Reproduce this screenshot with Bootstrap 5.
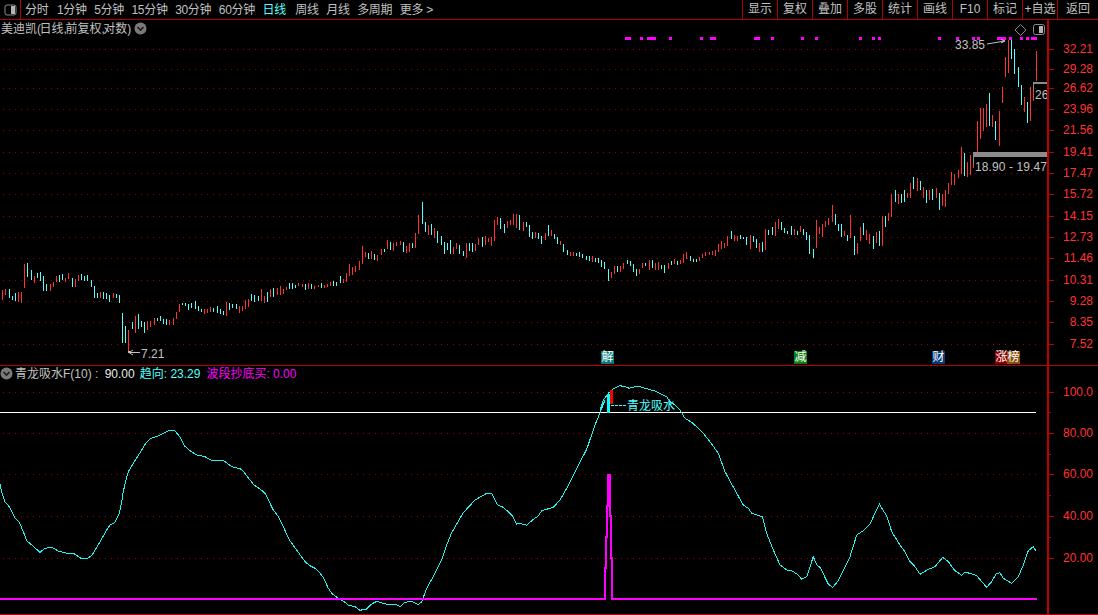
<!DOCTYPE html>
<html lang="zh">
<head>
<meta charset="utf-8">
<title>美迪凯</title>
<link href="https://cdn.jsdelivr.net/npm/bootstrap@5.3.0/dist/css/bootstrap.min.css" rel="stylesheet">
<style>
html,body{background:#000;height:100%;overflow:hidden}
body{font:12px/1 "Liberation Sans","Noto Sans CJK SC",sans-serif;color:#c0c0c0}
.tdx-app{width:1098px;height:615px}
.tdx-bar{height:20px;border-bottom:1px solid #b00000;flex:none}
.tdx-toggle{width:21px;border-right:1px solid #b00000}
.tdx-periods{padding-left:4px;gap:7.5px}
.tdx-periods span{letter-spacing:-.3px}
.tdx-periods span:first-child{margin-right:1px}
.tdx-periods .tdx-on{color:#54ffff;margin-right:2px}
.tdx-tools span{width:35px;height:19px;border-left:1px solid #b00000;text-align:center;line-height:19px}
.tdx-tools span:last-child{width:41px}
.tdx-pane{position:relative;flex:none;border-bottom:1px solid #b00000}
.tdx-main{height:346px}
.tdx-sub{height:249px}
.tdx-pane svg{display:block;position:absolute;left:0;top:0}
.tdx-title{position:relative;z-index:1;white-space:nowrap}
.tdx-main .tdx-title{padding:2px 0 0 1px;gap:4px}
.tdx-sub .tdx-title{padding:1px 0 0 0}
.tdx-comma{letter-spacing:-1.5px}
.tdx-paren{letter-spacing:-1.5px}
.tdx-name{margin-left:2px}
.tdx-cyan{color:#54ffff;margin-left:5px}
.tdx-mag{color:#ff00ff;margin-left:6px}
.tdx-white{color:#e8e8e8;margin-left:3px}
.tdx-chip{position:absolute;width:13px;height:13px;top:331px;color:#fff;text-align:center;line-height:13px;z-index:1}
.ax text{font-size:12px;fill:#ff3232;text-anchor:end}
.lab{font-size:12px;fill:#c0c0c0}
.crisp{shape-rendering:crispEdges}
</style>
</head>
<body>
<div class="tdx-app d-flex flex-column">
  <div class="tdx-bar d-flex align-items-stretch">
    <div class="tdx-toggle d-flex align-items-center justify-content-center">
      <svg width="13" height="12" viewBox="0 0 13 12"><rect x="1" y="1" width="11" height="10" rx="2" fill="none" stroke="#8a8a8a"/><rect x="7" y="2" width="4" height="8" fill="#b5b5b5"/></svg>
    </div>
    <div class="tdx-periods d-flex align-items-center flex-grow-1">
      <span>分时</span><span>1分钟</span><span>5分钟</span><span>15分钟</span><span>30分钟</span><span>60分钟</span><span class="tdx-on">日线</span><span>周线</span><span>月线</span><span>多周期</span><span>更多 &gt;</span>
    </div>
    <div class="tdx-tools d-flex">
      <span>显示</span><span>复权</span><span>叠加</span><span>多股</span><span>统计</span><span>画线</span><span>F10</span><span>标记</span><span>+自选</span><span>返回</span>
    </div>
  </div>

  <div class="tdx-pane tdx-main">
    <svg id="mainSvg" width="1098" height="345" viewBox="0 20 1098 345" aria-label="K线图">
      <g id="mainGrid" class="crisp"></g>
      <g id="candles" class="crisp"></g>
      <g id="flags" fill="#ff00ff" class="crisp"></g>
      <g class="crisp">
        <rect x="973" y="152" width="74" height="5" fill="#8c8c8c"/>
        <rect x="973" y="157" width="1" height="7" fill="#8c8c8c"/>
        <rect x="1033" y="82" width="14" height="2" fill="#8c8c8c"/>
        <rect x="1033" y="84" width="1" height="7" fill="#8c8c8c"/>
      </g>
      <text class="lab" x="1035" y="99">26</text>
      <text class="lab" x="975" y="171" textLength="72">18.90 - 19.47</text>
      <text class="lab" x="955" y="49">33.85</text>
      <path d="M987 44 L1005 41 M1001 39.5 L1005 41 L1001 43" fill="none" stroke="#c0c0c0"/>
      <text class="lab" x="141" y="358">7.21</text>
      <path d="M140 352.5 H129 M133 350 L129 352.5 L133 355" fill="none" stroke="#c0c0c0"/>
      <rect x="128" y="351" width="2" height="2" fill="#c0c0c0"/>
      <path d="M1020.5 24.5 L1026 30 L1020.5 35.5 L1015 30 Z" fill="none" stroke="#8a8a8a"/>
      <rect x="1033.5" y="24.5" width="11" height="10" rx="2" fill="none" stroke="#8a8a8a"/>
      <rect x="1039" y="26" width="4" height="7" fill="#b5b5b5"/>
      <g id="mainAxis"></g>
    </svg>
    <div class="tdx-title d-flex align-items-center">
      <span>美迪凯<span class="tdx-paren">(</span>日线<span class="tdx-comma">,</span>前复权<span class="tdx-comma">,</span>对数<span class="tdx-paren">)</span></span>
      <svg class="position-static" width="13" height="13" viewBox="0 0 13 13"><circle cx="6.5" cy="6.5" r="6" fill="#7a7a7a"/><path d="M3.5 5 L6.5 8 L9.5 5" fill="none" stroke="#1c1c1c" stroke-width="1.6"/></svg>
    </div>
    <div class="tdx-chip" style="left:601px;background:#0a7a7a">解</div>
    <div class="tdx-chip" style="left:794px;background:#0a8010">减</div>
    <div class="tdx-chip" style="left:932px;background:#0a3a7a">财</div>
    <div class="tdx-chip" style="left:995px;background:#8b0000">涨</div>
    <div class="tdx-chip" style="left:1007px;background:#8b5010">榜</div>
  </div>

  <div class="tdx-pane tdx-sub">
    <svg id="subSvg" width="1098" height="248" viewBox="0 366 1098 248" aria-label="指标图">
      <g id="subGrid" class="crisp"></g>
      <rect x="0" y="412" width="1036" height="1" fill="#fff" class="crisp"/>
      <polyline id="curve" fill="none" stroke="#22f4f4" class="crisp"/>
      <rect x="607" y="394" width="3" height="19" fill="#00ffff" class="crisp"/>
      <rect x="610" y="390" width="3" height="14" fill="#ff0000" class="crisp"/>
      <path d="M611 405.5 H626" stroke="#54ffff" stroke-dasharray="3 1" class="crisp"/>
      <text x="627" y="410" font-size="12" fill="#54ffff">青龙吸水</text>
      <path d="M0 599 H604.5 V568 H606 V537 H607 V506 H608 V475 H609.5 V516 H610.5 V558 H611.5 V599 H1037" fill="none" stroke="#ff00ff" stroke-width="2" class="crisp"/>
      <g id="subAxis"></g>
    </svg>
    <div class="tdx-title d-flex align-items-center">
      <svg class="position-static" width="13" height="13" viewBox="0 0 13 13"><circle cx="6.5" cy="6.5" r="6" fill="#7a7a7a"/><path d="M3.5 5 L6.5 8 L9.5 5" fill="none" stroke="#1c1c1c" stroke-width="1.6"/></svg>
      <span class="tdx-name">青龙吸水F(10) :&nbsp;<span class="tdx-white">90.00</span></span>
      <span class="tdx-cyan">趋向: 23.29</span>
      <span class="tdx-mag">波段抄底买: 0.00</span>
    </div>
  </div>
</div>

<script src="https://cdn.jsdelivr.net/npm/bootstrap@5.3.0/dist/js/bootstrap.bundle.min.js"></script>
<script>
var NS='http://www.w3.org/2000/svg';
function el(parent,tag,attrs,text){var e=document.createElementNS(NS,tag);for(var k in attrs)e.setAttribute(k,attrs[k]);if(text)e.textContent=text;document.getElementById(parent).appendChild(e);return e;}
function grid(parent,ys){ys.forEach(function(y){el(parent,'path',{d:'M3 '+(y+.5)+' H1037',stroke:'#a00000','stroke-dasharray':'1 5'});});}

var axisMain=[[49,'32.21'],[69,'29.28'],[88,'26.62'],[109,'23.96'],[130,'21.56'],[152,'19.41'],[173,'17.47'],[194,'15.72'],[216,'14.15'],[237,'12.73'],[258,'11.46'],[280,'10.31'],[301,'9.28'],[322,'8.35'],[344,'7.52']];
var axisSub=[[392,'100.0'],[433,'80.00'],[474,'60.00'],[516,'40.00'],[558,'20.00']];
grid('mainGrid',axisMain.map(function(a){return a[0];}));
grid('subGrid',axisSub.map(function(a){return a[0];}));
function axis(id,list,top,bottom,minor){
  el(id,'rect',{x:1047,y:top,width:2,height:bottom-top,fill:'#c00000',class:'crisp'});
  var g=document.getElementById(id);g.setAttribute('class','ax');
  list.forEach(function(a){
    el(id,'rect',{x:1049,y:a[0],width:5,height:1,fill:'#c00000',class:'crisp'});
    el(id,'text',{x:1093,y:a[0]+4},a[1]);
  });
  minor.forEach(function(y){el(id,'rect',{x:1049,y:y,width:2,height:1,fill:'#c00000',class:'crisp'});});
}
axis('mainAxis',axisMain,20,365,[]);
axis('subAxis',axisSub,366,614,[412,454,495,537]);

/* bars: offset x, offset y, "u color top-bottom" in 3x crop units */
var segs=[
[0,190,'7r300-330 16r297-316 27c298-325 37c318-330 46c309-332 55r305-337 64r306-338 73r222-295 82c220-262 94c240-270 103r258-280 112c250-265 121c246-272 130c258-304 139c283-303 150r283-303 159r276-291 169r258-276 178c255-277 187c252-271 196r265-276 205r250-268 216c263-290 226r266-290 235r255-272 245c252-270 253c257-273 262c256-272 274c270-290 283c288-323 292c310-323 301r306-323 310c306-326 319c309-328 328c316-337 340r310-325 349c312-323 358c315-338 367c370-460 376c408-460 385r420-490 396c396-416 405r378-428 415c372-418 424c392-412 433c396-428 442r393-420 451r393-410 463r385-406 472c384-394 481c378-392 490c386-402 499c388-405 508r390-406 520r383-404 529r366-386 538r342-366 547c339-346 556c340-347 565c343-361 574c340-355 586c334-357 595c349-362 604c356-367 613r357-372 622r358-369 631r352-367 640c354-367 652c347-369 661c357-372 670c364-376 679r336-378 688c339-360 697c341-354 709c342-356 718r349-368 727r347-363 736r331-356 745r327-350 754c312-334 763c314-336 775c318-333 784r297-334 793r319-338 802c307-336 811r296-320 820c295-320 832r293-315 841r288-316 850r296-313 859r290-300 868c280-296 877c280-296 886c286-294 895r278-288'],
[300,190,'7r282-291 16c282-300 25r278-296 34c282-297 43r289-297 55r285-292 64c279-294 73r286-293 82r283-292 91r277-288 100c273-289 109c277-288 121c258-278 130r267-279 139r249-275 148r222-258 157r232-255 166r228-245 178r213-240 187r168-222 196r186-202 205c190-207 214r183-207 223c192-209 232r195-213 244r178-195 253c177-186 262r150-178 271c156-180 280r160-183 289r155-168 301r153-165 310c155-187 319r168-189 328r159-186 337c159-173 346r129-174 355r75-132 367c36-102 376c96-125 385r105-136 394c102-135 403r114-144 412c123-158 424c138-165 433c156-192 442c160-180 451c150-192 460r171-192 469r159-177 478c165-192 490c183-198 499r159-204 508c159-183 517c159-186 526r162-183 535r144-165 547c141-171 556r138-165 565r144-156 574r141-168 583r90-153 592r81-105 601c84-117 613c102-129 622r93-114 631r90-105 640r72-105 649r72-114 658c75-120 670r96-123 679c96-111 688c105-141 697c126-147 706r126-144 715c129-147 724c138-162 736r129-150 745c105-138 754r120-138 763c132-147 772c141-162 781r153-165 790c162-186 802c180-195 811r186-198 820r186-198 829c189-198 838c186-201 847c192-204 859c198-210 868c198-213 877r198-216 886c204-216 895c204-219'],
[600,190,'4c210-232 13c216-237 25c237-273 34r246-264 43r228-252 52c228-246 61r228-246 70r219-237 82c210-222 91c213-228 100c222-246 109c237-258 118r237-252 127r219-234 136c219-228 148r210-240 157c210-234 166r219-240 175r216-240 184c225-237 193c225-249 205r219-237 214c213-225 223r207-222 232c213-225 241r210-222 250r192-219 259r186-207 271c198-213 280c207-216 289c207-216 298r201-213 307r192-204 316r186-198 328r186-195 337r183-195 346r180-198 355r162-186 364r153-177 373r159-174 382r138-168 394c123-147 403r135-153 412r138-153 421c135-147 430c141-147 439c141-165 451r135-177 460c138-156 469c147-174 478r159-186 487c156-186 496r117-180 505c120-135 517c111-135 526r96-138 535r87-117 544c96-120 553c114-129 562c123-132 574c108-135 583r117-135 592c123-135 601r108-126 610c117-135 619c126-150 628c135-192 640c177-204 649r90-174 658r111-132 667r102-141 676r93-111 685r84-105 697r45-96 706c72-105 715c102-123 724c102-141 733r123-138 742c135-153 751r75-144 763c138-195 772r159-192 781r111-153 790c99-135 799r120-150 808r132-162 820c138-177 829r126-159 838c123-168 847r78-168 856c78-111 865r69-93 874r12-81 886c0-36 895r12-42'],
[900,100,'4c282-309 13c270-305 22r280-295 31r250-293 40c231-267 52r233-272 61c243-270 70r260-293 79c270-308 88r270-300 97c268-300 109r265-295 118c280-329 127r283-318 136r270-320 145r248-283 154r215-255 163r222-254 175r210-234 184r141-222 193c160-228 202r185-232 211r165-225 220r170-205 232r63-155 241r23-117 250r23-94 259r13-82 268c-21-78 277r45-82 286c62-120 298r32-137'],
[700,0,'907r262-308 916r172-230 925r120-218 934c120-177 943c148-222 955c202-260 964c255-315 973r292-335 982c305-369 991r262-363 1000r245-303 1009r153-243']
];
var colors={r:'#ff3232',c:'#54ffff'};
segs.forEach(function(s){
  s[2].split(' ').forEach(function(t){
    var m=t.match(/^(\d+)([rc])(-?\d+)-(\d+)$/);
    var x=Math.round(s[0]+ +m[1]/3-.5), top=Math.round(s[1]+ +m[3]/3), bot=Math.round(s[1]+ +m[4]/3);
    el('candles','rect',{x:x,y:top,width:1,height:Math.max(1,bot-top),fill:colors[m[2]]});
  });
});

/* signal marks above the chart */
[[625,6],[640,3],[647,9],[669,3],[700,3],[710,6],[754,6],[771,3],[801,3],[815,3],[859,3],[872,3],[878,3],[938,3],[956,3],[972,3],[977,3],[997,9],[1009,3],[1020,3],[1026,3],[1031,6]].forEach(function(f){
  el('flags','rect',{x:f[0],y:37,width:f[1],height:3});
});

/* oscillator line, in crop units: [offset x, offset y, points] */
var curves=[
[0,360,'0,372 5,395 14,425 28,440 45,475 58,487 70,515 80,542 95,555 120,577 135,565 155,562 175,573 205,581 222,581 243,595 262,595 275,587 300,545 320,510 330,495 345,487 358,460 365,425 370,395 378,360 385,335 400,310 420,278 437,250 452,235 475,228 505,212 525,212 540,232 553,257 570,272 590,285 615,290 632,300 650,303 668,300 695,320 725,328 750,360 762,375 780,387 795,400 820,450 835,470 850,500 868,540 890,570 915,605 930,617 945,625 960,640'],
[320,400,'0,520 10,532 25,565 35,580 55,595 70,603 85,615 105,620 120,631 140,627 155,612 170,604 200,613 230,615 240,620 255,607 275,604 295,614 305,605 320,565 345,520 365,480 380,435 395,398 430,338 465,300 500,280 515,280 533,315 550,322 575,345 590,372 600,370 620,376 640,358 655,348 665,332 700,322 720,300 740,265 770,205 800,148 825,75 840,38 855,0'],
[560,345,'120,195 130,165 145,145 160,132 180,122 195,125 208,130 225,125 240,125 255,130 285,138 320,155 330,170 345,180 360,195 375,220 395,232 415,250'],
[700,430,'10,10 30,35 55,70 75,125 110,190 130,225 145,235 155,250 187,260 200,310 220,360 240,405 260,420 275,422 295,435 305,448 320,440 340,380 350,405 360,412 385,462 398,472 415,452 450,380 470,315 490,302 510,282 538,222 560,258 575,305 600,345 615,365 630,395 645,410 660,433 685,418 705,410 728,382 745,395 765,422 785,436 795,427 810,430 830,437 860,472 875,455 888,432 900,428 910,445 935,460 955,440 970,405 985,362 1000,350 1007,362']
];
var pts=[];
curves.forEach(function(c){c[2].split(' ').forEach(function(p){var v=p.split(',');pts.push((c[0]+v[0]/3).toFixed(1)+','+(c[1]+v[1]/3).toFixed(1));});});
document.getElementById('curve').setAttribute('points',pts.join(' '));
</script>
</body>
</html>
